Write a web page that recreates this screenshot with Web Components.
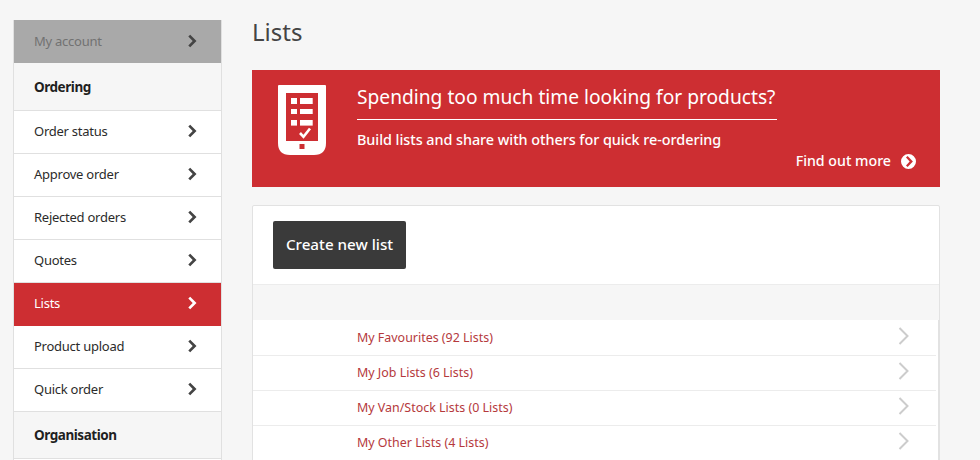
<!DOCTYPE html>
<html>
<head>
<meta charset="utf-8">
<style>
    html, body { margin: 0; height: 460px; overflow: hidden; background: #f6f6f6; }
    body { font-family: "Noto Sans", "Open Sans", sans-serif; color: #2b2b2b; }
</style>
</head>
<body>
<account-page>
    <side-menu slot="side">
        <menu-item variant="account">My account</menu-item>
        <menu-heading first>Ordering</menu-heading>
        <menu-item>Order status</menu-item>
        <menu-item>Approve order</menu-item>
        <menu-item>Rejected orders</menu-item>
        <menu-item>Quotes</menu-item>
        <menu-item variant="active">Lists</menu-item>
        <menu-item>Product upload</menu-item>
        <menu-item>Quick order</menu-item>
        <menu-heading>Organisation</menu-heading>
    </side-menu>
    <page-title>Lists</page-title>
    <promo-banner></promo-banner>
    <list-panel>
        <list-row>My Favourites (92 Lists)</list-row>
        <list-row>My Job Lists (6 Lists)</list-row>
        <list-row>My Van/Stock Lists (0 Lists)</list-row>
        <list-row>My Other Lists (4 Lists)</list-row>
    </list-panel>
</account-page>

<script>
const chevron = `<svg width="10" height="14" viewBox="0 0 10 14"><path d="M1.3 2.6 L5.7 7 L1.3 11.4 L3.2 13.3 L9.5 7 L3.2 .7 Z" fill="currentColor"/></svg>`;

class AccountPage extends HTMLElement {
    constructor() {
        super();
        this.attachShadow({ mode: 'open' });
        this.shadowRoot.innerHTML = `
            <style>
                :host { display: flex; gap: 30px; padding: 20px 0 0 13px; align-items: flex-start; }
                .side { display: block; width: 209px; flex: none; }
                main { width: 688px; flex: none; display: flex; flex-direction: column; }
            </style>
            <div class="side"><slot name="side"></slot></div>
            <main><slot></slot></main>
        `;
    }
}

class SideMenu extends HTMLElement {
    constructor() {
        super();
        this.attachShadow({ mode: 'open' });
        this.shadowRoot.innerHTML = `
            <style>
                :host { display: block; border: 1px solid #e0e0e0; border-top: 0; border-bottom: 0; background: #fff; padding-bottom: 10px; }
            </style>
            <slot></slot>
        `;
    }
}

class MenuItem extends HTMLElement {
    constructor() {
        super();
        this.attachShadow({ mode: 'open' });
        this.shadowRoot.innerHTML = `
            <style>
                :host {
                    display: flex; align-items: center; justify-content: space-between;
                    box-sizing: border-box; height: 43px; padding: 0 24px 2px 20px;
                    font-size: 13px; letter-spacing: -.25px; color: #2b2b2b;
                    border-bottom: 1px solid #e0e0e0; background: #fff;
                }
                :host([variant="active"]) { background: #cd2e32; color: #fff; border-bottom-color: #cd2e32; }
                :host([variant="account"]) { background: #a9a9a9; color: #727272; border-bottom-color: #a9a9a9; padding-bottom: 0; }
                svg { display: block; color: #444; }
                :host([variant="active"]) svg { color: #fff; }
            </style>
            <span><slot></slot></span>
            ${chevron}
        `;
    }
}

class MenuHeading extends HTMLElement {
    constructor() {
        super();
        this.attachShadow({ mode: 'open' });
        this.shadowRoot.innerHTML = `
            <style>
                :host {
                    display: flex; align-items: center; box-sizing: border-box;
                    height: 47px; padding: 0 20px; background: #f6f6f6;
                    font-size: 13.5px; letter-spacing: -.45px; font-weight: 700; color: #1f1f1f;
                    border-bottom: 1px solid #e0e0e0;
                }
                :host([first]) { height: 48px; }
            </style>
            <slot></slot>
        `;
    }
}

class PageTitle extends HTMLElement {
    constructor() {
        super();
        this.attachShadow({ mode: 'open' });
        this.shadowRoot.innerHTML = `
            <style>
                :host { display: block; height: 50px; font-size: 24px; line-height: 24px; color: #444; }
            </style>
            <slot></slot>
        `;
    }
}

class PromoBanner extends HTMLElement {
    constructor() {
        super();
        this.attachShadow({ mode: 'open' });
        this.shadowRoot.innerHTML = `
            <style>
                :host {
                    display: flex; box-sizing: border-box; height: 117px; margin-bottom: 18px;
                    background: #cd2e32; color: #fff; padding: 15px 24px 0 26px;
                }
                svg { display: block; flex: none; margin-right: 31px; }
                .copy { flex: 1; }
                h2 { margin: 0; width: 420px; box-sizing: border-box; height: 35px; font-size: 19.2px; line-height: 24px; font-weight: 400; border-bottom: 1px solid #fff; }
                p { margin: 11px 0 0; font-size: 14.4px; line-height: 18px; font-weight: 500; letter-spacing: -.05px; }
                .more { display: flex; justify-content: flex-end; align-items: center; gap: 10px; margin-top: 3px; font-size: 14.2px; line-height: 18px; font-weight: 500; }
            </style>
            <svg width="48" height="70" viewBox="0 0 48 70">
                <path fill-rule="evenodd" fill="#fff" d="M1 0H47Q48 0 48 1V58Q48 70 36 70H12Q0 70 0 58V1Q0 0 1 0Z M8 8V56H40V8Z M21.5 59V64H26.5V59Z"/>
                <g fill="#fff">
                    <rect x="13" y="13" width="6" height="6"/><rect x="22" y="13" width="12.7" height="6"/>
                    <rect x="13" y="24" width="6" height="5"/><rect x="22" y="24" width="12.7" height="5"/>
                    <rect x="13" y="35" width="6" height="5.6"/><rect x="22" y="35" width="12.7" height="5.6"/>
                </g>
                <path d="M22 48L25.5 51.8L32 43.5" fill="none" stroke="#fff" stroke-width="2.6"/>
            </svg>
            <div class="copy">
                <h2>Spending too much time looking for products?</h2>
                <p>Build lists and share with others for quick re-ordering</p>
                <div class="more">
                    <span>Find out more</span>
                    <svg style="margin:0" width="15" height="15" viewBox="0 0 15 15">
                        <path fill-rule="evenodd" fill="#fff" d="M7.5 0a7.5 7.5 0 1 0 0 15a7.5 7.5 0 1 0 0-15Z M5 3.4L6.6 1.9L11.9 7.5L6.6 13.1L5 11.6L8.7 7.5Z"/>
                    </svg>
                </div>
            </div>
        `;
    }
}

class ListPanel extends HTMLElement {
    constructor() {
        super();
        this.attachShadow({ mode: 'open' });
        this.shadowRoot.innerHTML = `
            <style>
                :host { display: block; background: #fff; border: 1px solid #e2e2e2; border-radius: 2px 2px 0 0; }
                .top { padding: 15px 20px; }
                button {
                    display: block; height: 48px; width: 133px; padding: 0 0 2px; border: 0; border-radius: 2px;
                    background: #3a3a3a; color: #fff; font: inherit; font-size: 15.2px; font-weight: 500;
                }
                .band { height: 36px; background: #f6f6f6; border-top: 1px solid #ececec; box-sizing: border-box; }
                .rows { margin-right: -1px; padding: 1px 2px 0 0; border-right: 2px solid #e2e2e2; }
            </style>
            <div class="top"><button>Create new list</button></div>
            <div class="band"></div>
            <div class="rows"><slot></slot></div>
        `;
    }
}

class ListRow extends HTMLElement {
    constructor() {
        super();
        this.attachShadow({ mode: 'open' });
        this.shadowRoot.innerHTML = `
            <style>
                :host {
                    display: flex; align-items: center; justify-content: space-between;
                    box-sizing: border-box; height: 35px; padding: 0 27px 2px 104px;
                    font-size: 12.45px; color: #b5393c; border-bottom: 1px solid #ececec;
                    background: #fff;
                }
                svg { display: block; margin-top: -3px; }
            </style>
            <span><slot></slot></span>
            <svg width="11" height="18" viewBox="0 0 11 18"><path d="M1.5 1L9.5 9L1.5 17" fill="none" stroke="#ccc" stroke-width="2"/></svg>
        `;
    }
}

customElements.define('account-page', AccountPage);
customElements.define('side-menu', SideMenu);
customElements.define('menu-item', MenuItem);
customElements.define('menu-heading', MenuHeading);
customElements.define('page-title', PageTitle);
customElements.define('promo-banner', PromoBanner);
customElements.define('list-panel', ListPanel);
customElements.define('list-row', ListRow);
</script>
</body>
</html>
